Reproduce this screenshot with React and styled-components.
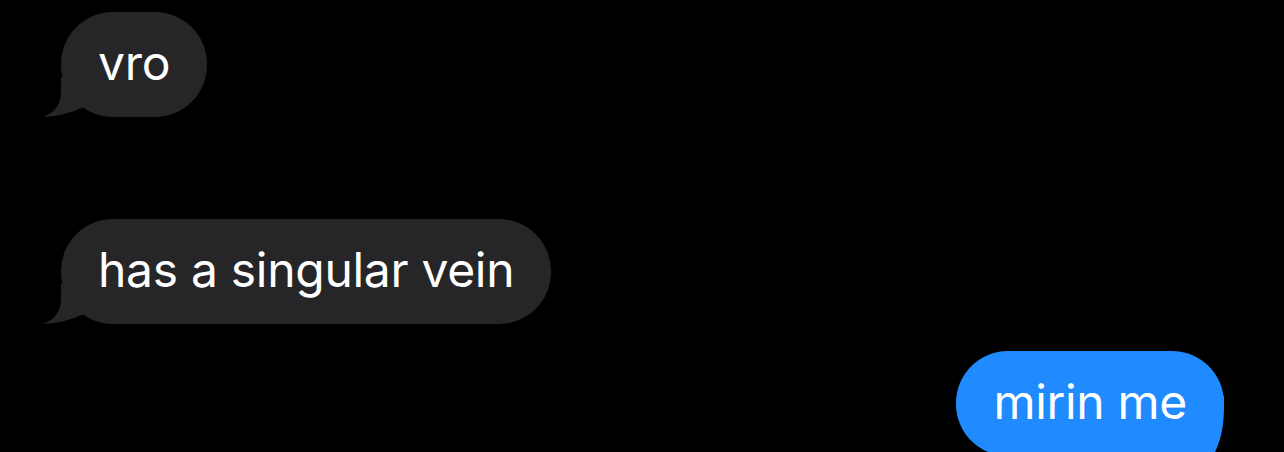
import React from 'react';
import styled, { createGlobalStyle } from 'styled-components';

const GlobalStyle = createGlobalStyle`
  html, body {
    margin: 0;
    padding: 0;
    background: #000;
  }
  body {
    font-family: Inter, 'Noto Sans', sans-serif;
    overflow: hidden;
  }
`;

const Thread = styled.div`
  display: flex;
  flex-direction: column;
  padding: 12px 60px 0 61px;
  width: 1284px;
  height: 452px;
  box-sizing: border-box;
  overflow: hidden;
`;

const Row = styled.div`
  display: flex;
  justify-content: ${(p) => (p.$sent ? 'flex-end' : 'flex-start')};
  margin-top: ${(p) => p.$gap || 0}px;
`;

const Bubble = styled.div`
  position: relative;
  height: 105px;
  box-sizing: border-box;
  padding: 0 37px 4px;
  display: flex;
  align-items: center;
  border-radius: 52px;
  background: ${(p) => (p.$sent ? '#208bff' : '#262629')};
  color: #fff;
  font-size: 48px;
  letter-spacing: -0.3px;
  line-height: 1;
`;

const Label = styled.span`
  position: relative;
  z-index: 1;
`;

const Tail = styled.svg`
  position: absolute;
  ${(p) =>
    p.$sent
      ? 'right: 0; bottom: -20px; width: 52px; height: 80px;'
      : 'left: -18px; bottom: 0; width: 44px; height: 40px;'}
`;

function Message({ text, sent, gap }) {
  const color = sent ? '#208bff' : '#262629';
  return (
    <Row $sent={sent} $gap={gap}>
      <Bubble $sent={sent}>
        {sent ? (
          <Tail $sent viewBox="0 0 52 80">
            <path
              d="M0 0 L52 0 L52 10 C52 30 49 46 40 62 C44 70 48 76 52 80 C40 80 30 76 22 70 L0 70 Z"
              fill={color}
            />
          </Tail>
        ) : (
          <Tail viewBox="0 0 44 40">
            <path
              d="M18 0 L18 16 C18 28 10 37 0 39.6 C10 40.4 25 37 41 30 L41 0 Z"
              fill={color}
            />
          </Tail>
        )}
        <Label>{text}</Label>
      </Bubble>
    </Row>
  );
}

export default function App() {
  return (
    <>
      <GlobalStyle />
      <Thread>
        <Message text="vro" />
        <Message text="has a singular vein" gap={102} />
        <Message text="mirin me" sent gap={27} />
      </Thread>
    </>
  );
}
